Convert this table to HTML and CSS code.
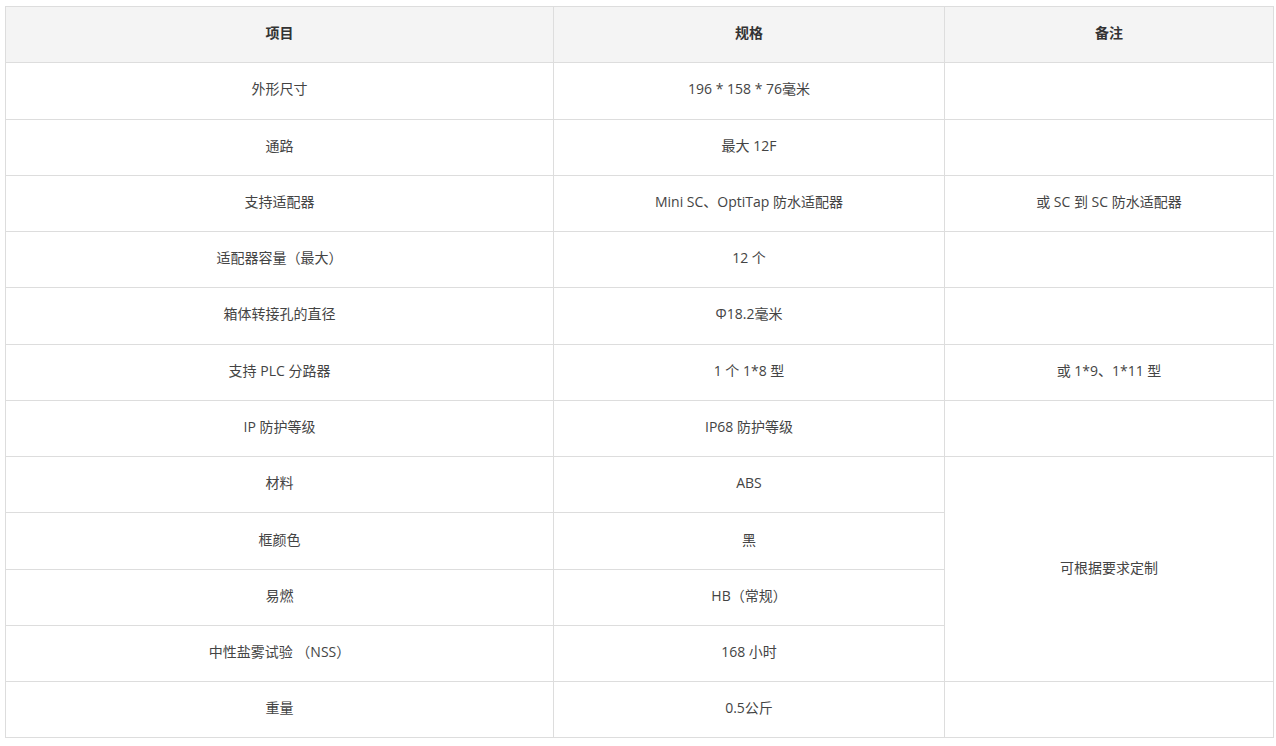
FILE: index.html
```html
<!DOCTYPE html>
<html lang="zh">
<head>
<meta charset="utf-8">
<title>规格</title>
<link rel="stylesheet" href="styles.css">
</head>
<body>
<div class="wrap">
<table class="spec">
  <colgroup>
    <col class="c1"><col class="c2"><col class="c3">
  </colgroup>
  <thead>
    <tr><th>项目</th><th>规格</th><th>备注</th></tr>
  </thead>
  <tbody>
    <tr><td>外形尺寸</td><td>196 * 158 * 76毫米</td><td></td></tr>
    <tr><td>通路</td><td>最大 12F</td><td></td></tr>
    <tr><td>支持适配器</td><td>Mini SC、OptiTap 防水适配器</td><td>或 SC 到 SC 防水适配器</td></tr>
    <tr><td>适配器容量（最大）</td><td>12 个</td><td></td></tr>
    <tr><td>箱体转接孔的直径</td><td>Φ18.2毫米</td><td></td></tr>
    <tr><td>支持 PLC 分路器</td><td>1 个 1*8 型</td><td>或 1*9、1*11 型</td></tr>
    <tr><td>IP 防护等级</td><td>IP68 防护等级</td><td></td></tr>
    <tr><td>材料</td><td>ABS</td><td rowspan="4">可根据要求定制</td></tr>
    <tr><td>框颜色</td><td>黑</td></tr>
    <tr><td>易燃</td><td>HB（常规）</td></tr>
    <tr><td>中性盐雾试验 （NSS）</td><td>168 小时</td></tr>
    <tr><td>重量</td><td>0.5公斤</td><td></td></tr>
  </tbody>
</table>
</div>
</body>
</html>
```

FILE: styles.css
```css
html, body {
  margin: 0;
  padding: 0;
  background: #ffffff;
}
body {
  font-family: "Open Sans", "Noto Sans CJK SC", sans-serif;
  font-size: 14px;
  color: #333333;
}
.wrap {
  padding: 6px 0 0 5px;
}
.spec {
  border-collapse: collapse;
  table-layout: fixed;
  width: 1268px;
}
.c1 { width: 548px; }
.c2 { width: 391px; }
.c3 { width: 329px; }
.spec th,
.spec td {
  border: 1px solid #dddddd;
  text-align: center;
  vertical-align: middle;
  padding: 0 8px 3px;
  height: 56.28px;
  box-sizing: border-box;
  line-height: 20px;
}
.spec th {
  background: #f4f4f4;
  font-weight: 700;
  color: #333333;
}
.spec td {
  color: #444444;
}
```
